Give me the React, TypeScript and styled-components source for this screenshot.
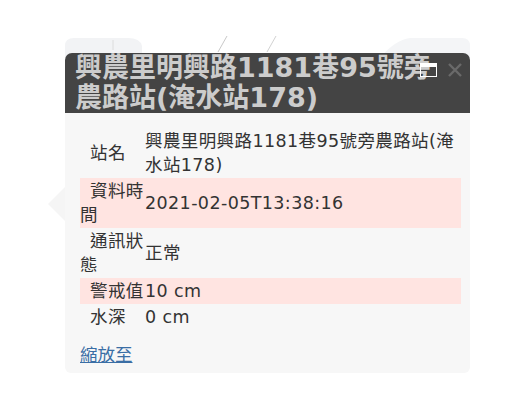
import styled, { createGlobalStyle } from "styled-components";

const GlobalStyle = createGlobalStyle`
    html, body {
        margin: 0;
        background: #ffffff;
    }
`;

const rows = [
    { label: "站名", value: "興農里明興路1181巷95號旁農路站(淹水站178)", alert: false },
    { label: "資料時間", value: "2021-02-05T13:38:16", alert: true },
    { label: "通訊狀態", value: "正常", alert: false },
    { label: "警戒值", value: "10 cm", alert: true },
    { label: "水深", value: "0 cm", alert: false },
];

const App = () => {
    return <Page>
        <GlobalStyle />
        {/* map fragment behind the popup */}
        <MapBits width="528" height="60" viewBox="0 0 528 60">
            <path d="M65 58 V46 Q65 38 74 38 H128 Q140 38 142 46 V58 Z" fill="#f2f3f5" />
            <path d="M380 58 Q395 40 410 38 H462 Q470 38 470 46 V58 Z" fill="#f4f5f7" />
            <line x1="113" y1="40" x2="113" y2="50" stroke="#dcdcdc" strokeWidth="1" />
            <line x1="227" y1="36" x2="218" y2="52" stroke="#c9c9c9" strokeWidth="1" />
            <line x1="276" y1="36" x2="267" y2="52" stroke="#d2d2d2" strokeWidth="1" />
        </MapBits>
        <Popup>
            <Pointer />
            <Header>
                <Title>興農里明興路1181巷95號旁農路站(淹水站178)</Title>
                <HeaderButtons>
                    <ButtonIcon width="17" height="14" viewBox="0 0 17 14">
                        <rect x="0.5" y="0.5" width="16" height="13" fill="none" stroke="#ffffff" strokeWidth="1" />
                        <rect x="0" y="0" width="17" height="4" fill="#ffffff" />
                    </ButtonIcon>
                    <ButtonIcon width="16" height="16" viewBox="0 0 16 16">
                        <path d="M2 2 L14 14 M14 2 L2 14" stroke="#6a6a6a" strokeWidth="2.4" />
                    </ButtonIcon>
                </HeaderButtons>
            </Header>
            <Body>
                <AttrTable>
                    <tbody>
                        {rows.map((row) => (
                            <AttrRow key={row.label} alert={row.alert}>
                                <AttrName>{row.label}</AttrName>
                                <AttrValue>{row.value}</AttrValue>
                            </AttrRow>
                        ))}
                    </tbody>
                </AttrTable>
                <ZoomLink href="#">縮放至</ZoomLink>
            </Body>
        </Popup>
    </Page>
}

const Page = styled.div`
    position: relative;
    width: 528px;
    height: 401px;
    padding: 53px 0 0 65px;
    box-sizing: border-box;
    font-family: "DejaVu Sans", "Noto Sans CJK TC", sans-serif;
`;

const MapBits = styled.svg`
    position: absolute;
    left: 0;
    top: 0;
`;

const Popup = styled.div`
    position: relative;
    width: 405px;
`;

const Pointer = styled.div`
    position: absolute;
    left: -17px;
    top: 134px;
    width: 0;
    height: 0;
    border-top: 17px solid transparent;
    border-bottom: 17px solid transparent;
    border-right: 17px solid #f5f5f5;
`;

const Header = styled.div`
    position: relative;
    height: 60px;
    overflow: hidden;
    background: #444444;
    border-radius: 7px 7px 0 0;
    padding: 0 25px 0 10px;
`;

const Title = styled.div`
    font-weight: bold;
    font-size: 27px;
    line-height: 30px;
    color: #cccccc;
`;

const HeaderButtons = styled.div`
    position: absolute;
    top: 9px;
    right: 7px;
    display: flex;
    align-items: center;
    gap: 10px;
`;

const ButtonIcon = styled.svg`
    display: block;
    flex-shrink: 0;
`;

const Body = styled.div`
    background: #f7f7f7;
    border-radius: 0 0 6px 6px;
    padding: 15px 9px 6px 15px;
`;

const AttrTable = styled.table`
    width: 100%;
    border-collapse: collapse;
    font-size: 17.5px;
    letter-spacing: 0.4px;
    line-height: 24px;
    color: #333333;
`;

const AttrRow = styled.tr<{ alert: boolean }>`
    background: ${(props) => (props.alert ? "#ffe4e1" : "transparent")};
`;

const AttrName = styled.td`
    width: 65px;
    padding: 1px 0;
    text-indent: 10px;
    vertical-align: middle;
`;

const AttrValue = styled.td`
    padding: 1px 0;
    vertical-align: middle;
`;

const ZoomLink = styled.a`
    display: inline-block;
    margin-top: 13px;
    font-size: 17.5px;
    line-height: 24px;
    color: #3a6ea5;
    text-decoration: underline;
`;

export default App;
